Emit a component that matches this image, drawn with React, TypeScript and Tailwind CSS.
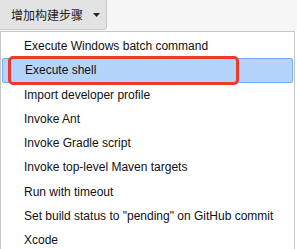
import React from 'react';

const items = [
  'Execute Windows batch command',
  'Execute shell',
  'Import developer profile',
  'Invoke Ant',
  'Invoke Gradle script',
  'Invoke top-level Maven targets',
  'Run with timeout',
  'Set build status to "pending" on GitHub commit',
  'Xcode',
];

export default function App() {
  return (
    <div
      className="relative w-[297px] h-[249px] overflow-hidden bg-white text-[#111]"
      style={{ fontFamily: '"Liberation Sans", Arial, "Noto Sans CJK SC", sans-serif' }}
    >
      {/* toolbar with the dropdown button */}
      <div className="h-[31px] bg-[#f7f7f7] flex">
        <button className="w-[107px] h-[30px] bg-[#e3e3e3] border-r border-b border-[#c9c9c9] rounded-br-[4px] flex items-center pl-[11px] gap-[10px] text-[12px] text-[#222]">
          <span style={{ fontFamily: '"Noto Sans CJK SC", sans-serif' }}>增加构建步骤</span>
          <svg width="7" height="4" viewBox="0 0 7 4" className="mt-[1px]">
            <path d="M0 0h7L3.5 4z" fill="#222" />
          </svg>
        </button>
      </div>

      {/* dropdown menu */}
      <div className="w-[295px] h-[218px] border-t border-l border-r border-[#c6c6c6] pt-[2px] px-[1px]">
        {items.map((label, i) => (
          <div
            key={label}
            className={`h-[24.25px] flex items-center pl-[22px] text-[12px] whitespace-nowrap ${
              i === 1 ? 'w-[291px] bg-[#b4d4fc] border-[1.5px] border-[#78aef4] rounded-[2px] pl-[20.5px]' : ''
            }`}
          >
            {label}
          </div>
        ))}
      </div>

      {/* red annotation box */}
      <div className="absolute left-[8px] top-[56px] w-[231px] h-[29px] border-[3px] border-[#f0392b] rounded-[5px]" />
    </div>
  );
}
